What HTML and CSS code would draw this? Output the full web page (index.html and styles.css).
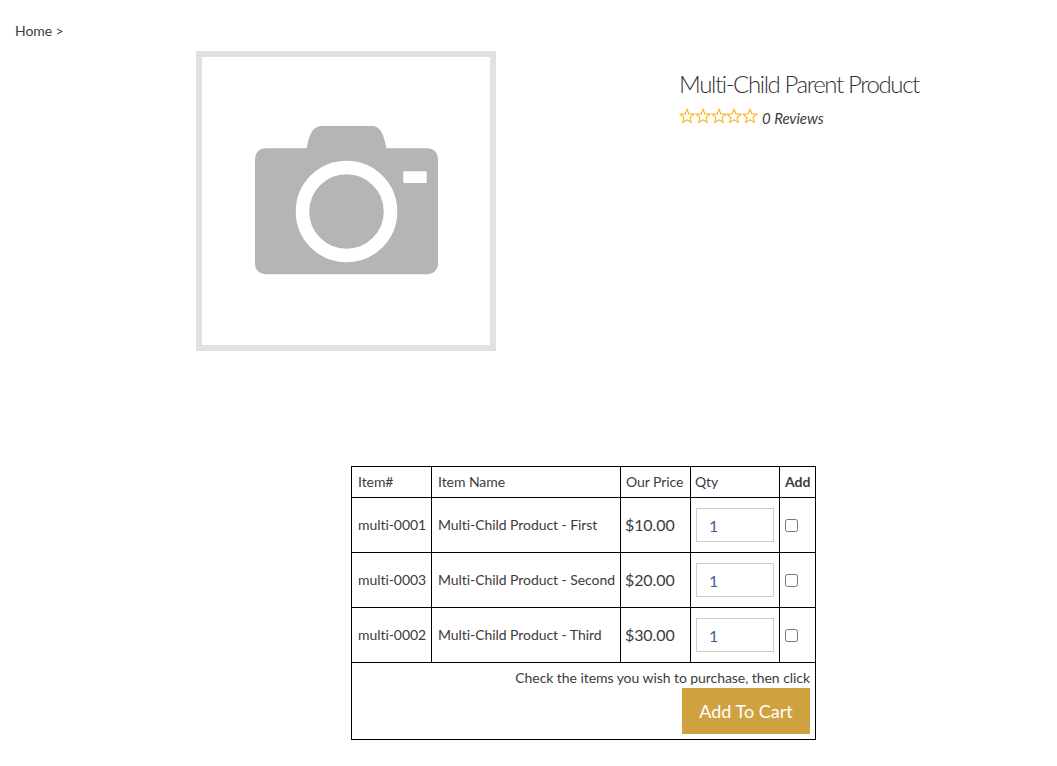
FILE: index.html
```html
<!DOCTYPE html>
<html lang="en">

<head>
    <meta charset="UTF-8">
    <title>Multi-Child Parent Product</title>
    <link rel="stylesheet" href="styles.css">
</head>

<body>
    <div class="crumbs">Home &gt;</div>
    <div class="product">
        <div class="photo">
            <svg width="184" height="150" viewBox="0 0 184 150">
                <path fill="#b5b5b5" d="M11 22.300H52.700C55 10 58 0 68 0H118C127 0 130 10 132.500 22.300H174A10 10 0 0 1 184 32.300V138.300A10 10 0 0 1 174 148.300H11A10 10 0 0 1 1 138.300V32.300A10 10 0 0 1 11 22.300Z"/>
                <circle cx="92.500" cy="85.500" r="44" fill="#b5b5b5" stroke="#fff" stroke-width="13.500"/>
                <rect x="149.300" y="45.300" width="23.400" height="11.700" fill="#fff"/>
            </svg>
        </div>
        <div class="info">
            <h1>Multi-Child Parent Product</h1>
            <div class="rating">
                <span class="stars">
                    <svg class="star" viewBox="0 0 16 16"><path d="M8 1.300L9.900 5.900L14.800 6.300L11.100 9.500L12.200 14.300L8 11.800L3.800 14.300L4.900 9.500L1.200 6.300L6.100 5.900Z"/></svg>
                    <svg class="star" viewBox="0 0 16 16"><path d="M8 1.300L9.900 5.900L14.800 6.300L11.100 9.500L12.200 14.300L8 11.800L3.800 14.300L4.900 9.500L1.200 6.300L6.100 5.900Z"/></svg>
                    <svg class="star" viewBox="0 0 16 16"><path d="M8 1.300L9.900 5.900L14.800 6.300L11.100 9.500L12.200 14.300L8 11.800L3.800 14.300L4.900 9.500L1.200 6.300L6.100 5.900Z"/></svg>
                    <svg class="star" viewBox="0 0 16 16"><path d="M8 1.300L9.900 5.900L14.800 6.300L11.100 9.500L12.200 14.300L8 11.800L3.800 14.300L4.900 9.500L1.200 6.300L6.100 5.900Z"/></svg>
                    <svg class="star" viewBox="0 0 16 16"><path d="M8 1.300L9.900 5.900L14.800 6.300L11.100 9.500L12.200 14.300L8 11.800L3.800 14.300L4.900 9.500L1.200 6.300L6.100 5.900Z"/></svg>
                </span>
                <em>0 Reviews</em>
            </div>
        </div>
    </div>
    <table class="items">
        <tr>
            <td class="col-sku">Item#</td>
            <td class="col-name">Item Name</td>
            <td class="col-price">Our Price</td>
            <td class="col-qty">Qty</td>
            <td class="col-add"><b>Add</b></td>
        </tr>
        <tr class="row">
            <td>multi-0001</td>
            <td>Multi-Child Product - First</td>
            <td class="price">$10.00</td>
            <td><input class="qty" type="text" value="1"></td>
            <td><input class="check" type="checkbox"></td>
        </tr>
        <tr class="row">
            <td>multi-0003</td>
            <td>Multi-Child Product - Second</td>
            <td class="price">$20.00</td>
            <td><input class="qty" type="text" value="1"></td>
            <td><input class="check" type="checkbox"></td>
        </tr>
        <tr class="row">
            <td>multi-0002</td>
            <td>Multi-Child Product - Third</td>
            <td class="price">$30.00</td>
            <td><input class="qty" type="text" value="1"></td>
            <td><input class="check" type="checkbox"></td>
        </tr>
        <tr>
            <td class="foot" colspan="5">
                <div class="hint">Check the items you wish to purchase, then click</div>
                <button class="cart" type="button">Add To Cart</button>
            </td>
        </tr>
    </table>
</body>

</html>
```

FILE: styles.css
```css
* {
    box-sizing: border-box;
}

body {
    margin: 0;
    padding: 23px 15px 0;
    font-family: Lato, "Liberation Sans", sans-serif;
    font-size: 14px;
    line-height: 16px;
    letter-spacing: -0.06px;
    color: #3c3c3c;
}

.crumbs {
    height: 28px;
}

.product {
    display: flex;
    padding-left: 181px;
}

.photo {
    width: 300px;
    height: 300px;
    border: 6px solid #e1e1e1;
    display: flex;
    align-items: center;
    justify-content: center;
}

.info {
    margin-left: 183px;
    padding-top: 19px;
}

h1 {
    margin: 0;
    font-size: 24px;
    line-height: 28px;
    font-weight: 300;
    letter-spacing: -1.4px;
    color: #333;
}

.rating {
    display: flex;
    align-items: center;
    gap: 4px;
    margin-top: 8px;
}

.rating em {
    font-size: 15px;
    margin-top: 4px;
}

.stars {
    display: flex;
}

.star {
    width: 16px;
    height: 16px;
    margin-right: -0.200px;
    fill: none;
    stroke: #fbb320;
    stroke-width: 1.100;
}

.items {
    margin: 115px 0 0 336px;
    border-collapse: collapse;
    table-layout: fixed;
    width: 465px;
}

.items td {
    border: 1px solid #000;
    padding: 5px;
    height: 31px;
    white-space: nowrap;
}

.items .col-sku,
.items .col-name,
.row td:first-child,
.row td:nth-child(2) {
    padding-left: 6px;
}

.row td {
    height: 55px;
}

.items .price {
    padding-left: 4px;
    font-size: 16px;
    letter-spacing: -0.1px;
}

.col-sku {
    width: 80px;
}

.col-name {
    width: 189px;
}

.col-price {
    width: 70px;
}

.items .col-qty {
    width: 89px;
    padding-left: 4px;
}

.col-add {
    width: 36px;
}

.items .row td:nth-child(4) {
    padding-left: 5px;
}

.qty {
    width: 78px;
    height: 34px;
    padding: 0 12px;
    border: 1px solid #ccc;
    font-family: Lato, sans-serif;
    font-size: 16px;
    color: #3f6296;
}

.check {
    display: block;
    width: 13px;
    height: 13px;
    margin: 0;
}

.items .foot {
    text-align: right;
    height: 77px;
}

.hint {
    padding-top: 1px;
}

.cart {
    display: block;
    margin: 2px 0 0 auto;
    width: 128px;
    height: 46px;
    border: 0;
    background: #cfa23f;
    color: #fff;
    font-family: Lato, sans-serif;
    font-size: 18px;
}
```
